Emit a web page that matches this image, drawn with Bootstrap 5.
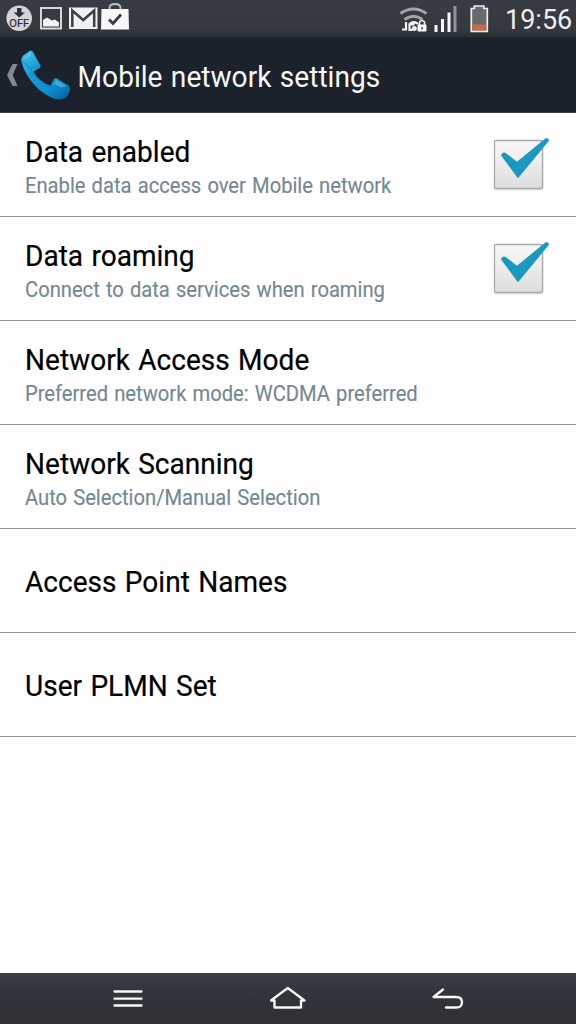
<!DOCTYPE html>
<html lang="en">
<head>
<meta charset="utf-8">
<meta name="viewport" content="width=device-width, initial-scale=1">
<title>Mobile network settings</title>
<link href="https://cdn.jsdelivr.net/npm/bootstrap@5.3.0/dist/css/bootstrap.min.css" rel="stylesheet">
<style>
body{font-family:Roboto,"Liberation Sans",sans-serif;background:#fefefe;color:#000;height:1024px;overflow:hidden}
svg{display:block;flex:none}
.status-bar{height:37px;background:linear-gradient(#373b43,#35383e 80%,#292d34);padding:0 4px}
.clock{font-size:27px;line-height:37px;color:#eceff1;padding-top:3px;width:67px;white-space:nowrap}
.title-bar{height:76px;background:#1b222c;border-top:1px solid #20262e;border-bottom:1px solid #3c4045}
.squeeze{display:inline-block;transform-origin:0 50%;white-space:nowrap}
.page-title{font-size:30px;line-height:40px;color:#f5f7f8;transform:scaleX(.937);word-spacing:1.5px;padding:4px 0 0 .6px}
.setting{height:104px;border:0;border-radius:0;background:#fefefe;padding:0 27px 0 25px;color:#000;box-shadow:inset 0 -1px #959595}
.setting-text{padding-top:2px}
.setting-name{font-size:30px;line-height:36px;transform:scaleX(.935);word-spacing:1.5px;-webkit-text-stroke:.2px #000}
.setting-note{font-size:21.5px;line-height:28px;color:#748894;transform:scaleX(.938);word-spacing:1.2px;margin:2px 0 -2px;-webkit-text-stroke:.15px #748894}
.key-bar{height:51px;background:linear-gradient(#373c45,#303338 55%,#303236)}
</style>
</head>
<body class="d-flex flex-column">
<header>
  <div class="status-bar d-flex align-items-center justify-content-between">
    <svg width="130" height="37" viewBox="4 0 130 37">
      <circle cx="19.2" cy="18.3" r="12.8" fill="#d4d5d8"/>
      <path d="M17 8h4.500v4.500h3.500l-5.700 5-5.800-5H17z" fill="#303238"/>
      <text x="19.300" y="27" font-size="10.500" text-anchor="middle" textLength="20" lengthAdjust="spacingAndGlyphs" fill="#292c33" stroke="#292c33" stroke-width=".2">OFF</text>
      <rect x="41" y="8" width="20" height="20.500" fill="none" stroke="#dfe0e2" stroke-width="1.900"/>
      <path d="M43 26.500V20l4-2.500 5 3 3-1 4 3v4z" fill="#f2f2f2"/>
      <rect x="69" y="7.500" width="28.500" height="21.500" fill="#eff0f1"/>
      <path d="M72.300 27V10.500L83.200 20 94.200 10.500V27" fill="none" stroke="#3c3f45" stroke-width="2.500"/>
      <path d="M109.500 10v-2q0-4 5.500-4t5.500 4v2" fill="none" stroke="#bfc1c5" stroke-width="1.800"/>
      <path d="M101.500 9h27l.5 20.500h-28z" fill="#f7f7f8"/>
      <path d="m109 19.500 4 4 8-9" fill="none" stroke="#383b42" stroke-width="2.800"/>
    </svg>
    <div class="d-flex align-items-center">
      <svg width="106" height="37" viewBox="399 0 106 37">
        <g fill="none" stroke="#a3a5a9" stroke-width="3">
          <path d="M400.500 13.500q13-9 26 0"/>
          <path d="M404.500 19.500q9-6.500 18 0"/>
        </g>
        <path d="M402 29.500h4V22M409.500 31v-7q4.500-3.500 8.500 0M409.500 24.500h5M409.500 30h3" fill="none" stroke="#f2f2f2" stroke-width="2.200"/>
        <circle cx="414.300" cy="28.500" r="2.500" fill="#eee"/>
        <rect x="417.500" y="24.500" width="9" height="7" rx="1" fill="#f7f7f7"/>
        <path d="M419.500 25v-3q2.500-3 5 0v3" fill="none" stroke="#f7f7f7" stroke-width="1.600"/>
        <rect x="421.300" y="27" width="1.500" height="2.500" fill="#45484e"/>
        <path d="M434.500 25h3v7h-3zM441 19h3v13h-3zM447.500 12.500h3V32h-3z" fill="#f7f7f7"/>
        <path d="M453.500 6h3v26h-3z" fill="#909399"/>
        <path d="M471.300 8.500h3V6h9.500v2.500h3.500v22.800h-16z" fill="#676a6d" stroke="#f3eee9" stroke-width="1.700"/>
        <path d="M472.500 24.500H486.300V30.400h-13.800z" fill="#cb6940"/>
      </svg>
      <div class="clock">19:56</div>
    </div>
  </div>
  <div class="title-bar d-flex align-items-center">
    <svg width="77" height="74" viewBox="0 38 77 74">
      <defs><linearGradient id="handset" x1="0" y1="0" x2=".8" y2="1"><stop stop-color="#43c1ee"/><stop offset=".38" stop-color="#1b9bd5"/><stop offset=".75" stop-color="#1290d0"/><stop offset="1" stop-color="#0869a8"/></linearGradient></defs>
      <path d="M12.500 64H17.500L12.700 75 17.500 86H12.500L7 75z" fill="#858a92"/>
      <path d="M29.500 51q2-1.500 3.500 1l7.500 13.500q.7 1.800-1 2.500l-6 3.500q2.500 5.500 8 9.500 4.500 3.500 9 4.500l3.500-6.500q1-1.300 3-.5L68.500 85.500q1.800 1.500 1.500 4.500-2 8.500-9.500 9.500-8 .8-21-9.500Q25 77 21.200 61q-.5-2.500 2-5.500z" fill="url(#handset)"/>
      <path d="M22 61l8 7 9.500-2M30 68q5 12 20.500 20l4-8M51 88l10 5.500 8.500-5" fill="none" stroke="#0a7fc0" stroke-width="1.500" opacity=".45"/>
      <path d="M30 52l-7 7q4 1 9-5zM56 80l11 6-6 1.500-7-4z" fill="#72d3f3" opacity=".45"/>
    </svg>
    <h1 class="page-title squeeze mb-0 fw-normal">Mobile network settings</h1>
  </div>
</header>
<main class="list-group list-group-flush flex-grow-1">
  <div class="list-group-item setting d-flex align-items-center justify-content-between">
    <div class="setting-text d-flex flex-column align-items-start"><span class="setting-name squeeze">Data enabled</span><span class="setting-note squeeze">Enable data access over Mobile network</span></div>
    <svg width="58" height="60" viewBox="491 135 58 60" role="img" aria-label="On">
      <linearGradient id="box" x1="0" y1="0" x2="0" y2="1"><stop stop-color="#f8f8f8"/><stop offset="1" stop-color="#dedede"/></linearGradient>
      <rect x="494" y="141" width="49.500" height="49.500" rx="2.500" fill="#ddd" opacity=".7"/>
      <rect x="494.500" y="140.500" width="48" height="48" rx="2" fill="url(#box)" stroke="#a9a9a9" stroke-width="1.300"/>
      <path d="M501.300 155.500q.5-3.500 4-2.500L517 162 545.300 138.800q3.700-1.300 3.200 2.200L518 178z" fill="#1c98bd" stroke="#1c98bd" stroke-width=".5"/>
    </svg>
  </div>
  <div class="list-group-item setting d-flex align-items-center justify-content-between">
    <div class="setting-text d-flex flex-column align-items-start"><span class="setting-name squeeze">Data roaming</span><span class="setting-note squeeze">Connect to data services when roaming</span></div>
    <svg width="58" height="60" viewBox="491 135 58 60" role="img" aria-label="On">
      <rect x="494" y="141" width="49.500" height="49.500" rx="2.500" fill="#ddd" opacity=".7"/>
      <rect x="494.500" y="140.500" width="48" height="48" rx="2" fill="url(#box)" stroke="#a9a9a9" stroke-width="1.300"/>
      <path d="M501.300 155.500q.5-3.500 4-2.500L517 162 545.300 138.800q3.700-1.300 3.200 2.200L518 178z" fill="#1c98bd" stroke="#1c98bd" stroke-width=".5"/>
    </svg>
  </div>
  <div class="list-group-item setting d-flex align-items-center">
    <div class="setting-text d-flex flex-column align-items-start"><span class="setting-name squeeze">Network Access Mode</span><span class="setting-note squeeze">Preferred network mode: WCDMA preferred</span></div>
  </div>
  <div class="list-group-item setting d-flex align-items-center">
    <div class="setting-text d-flex flex-column align-items-start"><span class="setting-name squeeze">Network Scanning</span><span class="setting-note squeeze">Auto Selection/Manual Selection</span></div>
  </div>
  <div class="list-group-item setting d-flex align-items-center"><div class="setting-text"><span class="setting-name squeeze">Access Point Names</span></div></div>
  <div class="list-group-item setting d-flex align-items-center"><div class="setting-text"><span class="setting-name squeeze">User PLMN Set</span></div></div>
</main>
<nav class="key-bar flex-shrink-0 d-flex justify-content-center align-items-center">
  <svg width="576" height="51" viewBox="0 973 576 51" fill="none" stroke="#f7f8f8" stroke-width="2.300" stroke-linecap="round" stroke-linejoin="round">
    <path d="M114.500 991.500h27M114.500 998.700h27M114.500 1005.500h27"/>
    <path d="M274.500 1007.500v-7h-3.500L287.800 988l16.700 12.500H301v7z"/>
    <path d="M443 989.500l-9.500 7.500H456q6 0 6 5.300t-6 5.200H446"/>
  </svg>
</nav>
<script src="https://cdn.jsdelivr.net/npm/bootstrap@5.3.0/dist/js/bootstrap.bundle.min.js"></script>
</body>
</html>
